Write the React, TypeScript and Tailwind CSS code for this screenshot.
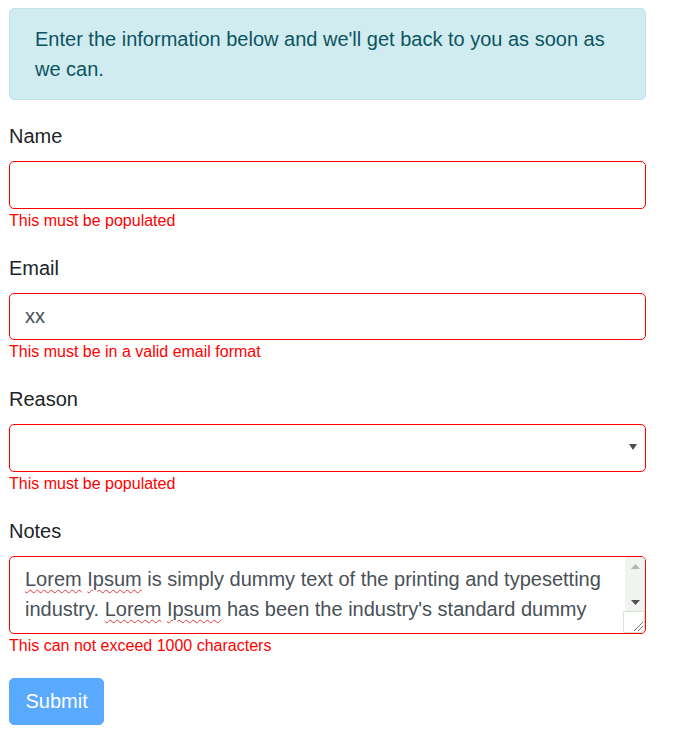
import React from 'react'

const fieldClass =
  'block w-full h-[47.5px] rounded-[5px] border border-[#ff0000] bg-white px-[15px] text-[20px] leading-[30px] text-[#495057] outline-none'

function Feedback({ children }: { children: React.ReactNode }) {
  return <div className="text-[16px] leading-[24px] text-[#ff0000]">{children}</div>
}

function Squiggle({ children }: { children: React.ReactNode }) {
  return (
    <span className="underline decoration-wavy decoration-[#e0393e] decoration-1 underline-offset-[3px]">
      {children}
    </span>
  )
}

export default function App() {
  return (
    <div
      className="w-[697px] min-h-[731px] bg-white pt-[8px] pl-[9px]"
      style={{ fontFamily: '"Liberation Sans", Arial, sans-serif' }}
    >
      <div className="w-[637px]">
        <div className="mb-[21px] rounded-[5px] border border-[#bee5eb] bg-[#d1ecf1] px-[25px] py-[15px] text-[20px] leading-[30px] text-[#0c5460]">
          Enter the information below and we'll get back to you as soon as we can.
        </div>

        <form className="text-[20px] leading-[30px] text-[#212529]">
          <div className="mb-[20px]">
            <label className="mb-[10px] block">Name</label>
            <input className={fieldClass} defaultValue="" />
            <Feedback>This must be populated</Feedback>
          </div>

          <div className="mb-[20px]">
            <label className="mb-[10px] block">Email</label>
            <input className={fieldClass} defaultValue="xx" />
            <Feedback>This must be in a valid email format</Feedback>
          </div>

          <div className="mb-[20px]">
            <label className="mb-[10px] block">Reason</label>
            <div className="relative">
              <div className={fieldClass} />
              <svg
                className="absolute right-[9px] top-[20px]"
                width="8"
                height="6"
                viewBox="0 0 8 6"
              >
                <path d="M0 0h8L4 6z" fill="#495057" />
              </svg>
            </div>
            <Feedback>This must be populated</Feedback>
          </div>

          <div className="mb-[20px]">
            <label className="mb-[10px] block">Notes</label>
            <div className="relative h-[78px] rounded-[5px] border border-[#ff0000] bg-white">
              <div className="pl-[15px] pr-[32px] pt-[7.5px] text-[20px] leading-[30px] text-[#495057]">
                <Squiggle>Lorem</Squiggle> <Squiggle>Ipsum</Squiggle> is simply dummy text of the
                printing and typesetting industry. <Squiggle>Lorem</Squiggle>{' '}
                <Squiggle>Ipsum</Squiggle> has been the industry's standard dummy
              </div>
              <div className="absolute right-0 top-0 flex h-[55px] w-[20px] flex-col items-center justify-between rounded-tr-[4px] bg-[#f1f3f1] py-[7px]">
                <svg width="9" height="5" viewBox="0 0 9 5">
                  <path d="M0 5h9L4.5 0z" fill="#b4b6a8" />
                </svg>
                <svg width="9" height="5" viewBox="0 0 9 5">
                  <path d="M0 0h9L4.5 5z" fill="#505050" />
                </svg>
              </div>
              <div className="absolute bottom-0 right-0 h-[22px] w-[22px] rounded-br-[4px] border border-[#d3e6d0] bg-white">
                <svg className="absolute bottom-[1px] right-[1px]" width="10" height="10" viewBox="0 0 10 10">
                  <path d="M1 10L10 1M5 10L10 5" stroke="#777" strokeWidth="1" />
                </svg>
              </div>
            </div>
            <Feedback>This can not exceed 1000 characters</Feedback>
          </div>

          <button
            type="button"
            disabled
            className="h-[47px] rounded-[5px] border border-[#59a9ff] bg-[#59a9ff] px-[15.5px] text-[20px] leading-[30px] text-white"
          >
            Submit
          </button>
        </form>
      </div>
    </div>
  )
}
